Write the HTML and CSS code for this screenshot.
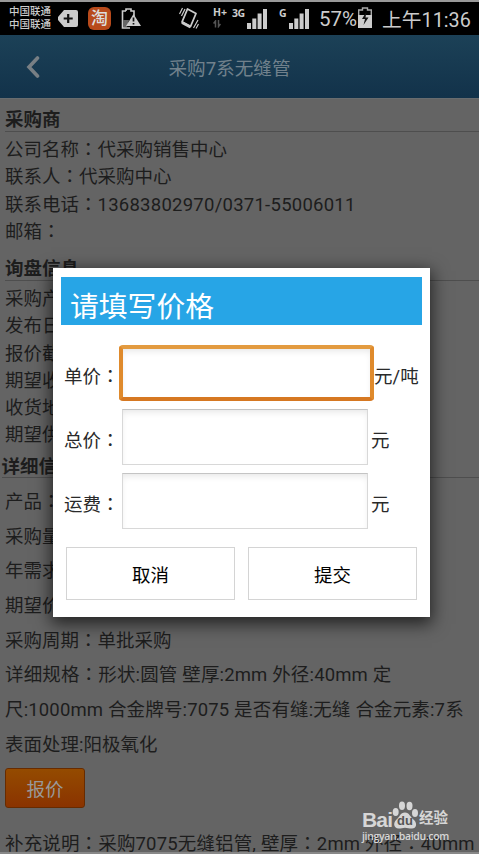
FILE: index.html
```html
<!DOCTYPE html>
<html lang="en">
<head>
  <meta charset="UTF-8">
  <title>采购7系无缝管</title>
  <meta name="viewport" content="width=device-width, initial-scale=1.0">
  <link rel="stylesheet" href="styles.css">
</head>
<body>
  <div class="phone">
    <!-- Status bar -->
    <div class="status-bar">
      <div class="carrier"><span>中国联通</span><span>中国联通</span></div>
      <svg class="icon-plus" width="22" height="20" viewBox="0 0 22 20"><path d="M7 1h12q2 0 2 2v13q0 2-2 2H7L1 11V8z" fill="#ccc"/><path d="M11.2 5v9M6.700 9.500h9" stroke="#111" stroke-width="2.200"/></svg>
      <span class="icon-tao">淘</span>
      <svg class="icon-warn" width="20" height="22" viewBox="0 0 20 22"><path d="M5 3V1h5v2h3v5M9 20H1.500V3H5" fill="none" stroke="#ccc" stroke-width="1.600"/><path d="M2 12h6l-2 7H2z" fill="#666"/><path d="M12.500 6L20 18H5z" fill="#ccc"/><path d="M12.500 9.500v4M12.500 15v1.600" stroke="#111" stroke-width="1.700"/></svg>
      <svg class="icon-vibrate" width="20" height="23" viewBox="0 0 20 23"><path d="M8.500 2L17 6.500 11.500 19.500 3 15z" fill="none" stroke="#ccc" stroke-width="1.800" stroke-linejoin="round"/><path d="M3 15.500l8.500 4.500" stroke="#ccc" stroke-width="3"/><path d="M.5 7l3-6M2.500 9l3.500-7M14.500 21l4.500-8M17 21.500l2.500-4.500" stroke="#ccc" stroke-width="1.200"/></svg>
      <div class="net"><span>H+</span><svg width="8" height="8" viewBox="0 0 8 8"><path d="M2.500 7.500V1L.5 3.500M5.500 0v6.500l2-2.500" fill="none" stroke="#555" stroke-width="1.500"/></svg></div>
      <span class="gen">3G</span>
      <svg class="bars" width="20" height="20" viewBox="0 0 20 20"><path d="M0 14h4v6H0zM5.300 9.500h4V20h-4zM10.600 4.500h4V20h-4zM16 0h4v20h-4z" fill="#ccc"/></svg>
      <span class="gen gen-second">G</span>
      <svg class="bars" width="20" height="20" viewBox="0 0 20 20"><path d="M0 14h4v6H0zM5.300 9.500h4V20h-4zM10.600 4.500h4V20h-4zM16 0h4v20h-4z" fill="#ccc"/></svg>
      <span class="percent">57%</span>
      <svg class="icon-battery" width="14" height="21" viewBox="0 0 14 21"><path d="M4.500 3V1h5v2h3.800v17H.7V3z" fill="none" stroke="#aaa" stroke-width="1.400"/><path d="M0 8h14v13H0z" fill="#ccc"/><path d="M8.500 4.500L4 12h3l-1.500 6 5-7.500H7.500z" fill="#111"/></svg>
      <span class="clock">上午11:36</span>
    </div>

    <div class="nav-bar">
      <svg class="back" width="14" height="22" viewBox="0 0 14 22"><path d="M11.500 2L3 11l8.500 9" fill="none" stroke="#787f84" stroke-width="3.600" stroke-linecap="round"/></svg>
      <h1>采购7系无缝管</h1>
    </div>

    <div class="content">
      <h2>采购商</h2>
      <div class="rows">
        <p>公司名称<i>：</i>代采购销售中心</p>
        <p>联系人<i>：</i>代采购中心</p>
        <p>联系电话<i>：</i><span class="phone-number">13683802970/0371-55006011</span></p>
        <p>邮箱<i>：</i></p>
      </div>

      <h2>询盘信息</h2>
      <div class="rows">
        <p>采购产</p>
        <p>发布日</p>
        <p>报价截</p>
        <p>期望收</p>
        <p>收货地</p>
        <p>期望供</p>
      </div>

      <h2 class="detail-title">详细信</h2>
      <div class="rows rows-wide">
        <p>产品<i>：</i></p>
        <p>采购量</p>
        <p>年需求</p>
        <p>期望价</p>
        <p>采购周期<i>：</i>单批采购</p>
        <p class="spec">详细规格<i>：</i>形状:圆管 壁厚:2mm 外径:40mm 定</p>
        <p class="spec">尺:1000mm 合金牌号:7075 是否有缝:无缝 合金元素:7系</p>
        <p>表面处理:阳极氧化</p>
      </div>
      <button class="quote-btn">报价</button>
      <p class="remark">补充说明<i>：</i>采购7075无缝铝管, 壁厚<i>：</i>2mm 外径<i>：</i>40mm</p>
    </div>

    <!-- Price dialog -->
    <form class="dialog" autocomplete="off">
      <h3>请填写价格</h3>
      <div class="field field-focus">
        <label for="unitPrice">单价<i>：</i></label>
        <input type="text" id="unitPrice" name="unitPrice">
        <span class="unit">元/吨</span>
      </div>
      <div class="field">
        <label for="totalPrice">总价<i>：</i></label>
        <input type="text" id="totalPrice" name="totalPrice">
        <span class="unit">元</span>
      </div>
      <div class="field">
        <label for="freight">运费<i>：</i></label>
        <input type="text" id="freight" name="freight">
        <span class="unit">元</span>
      </div>
      <div class="actions">
        <button type="button">取消</button>
        <button type="button">提交</button>
      </div>
    </form>

    <div class="watermark">
      <div class="brand">
        <span class="bai">Bai</span>
        <span class="paw">
          <svg width="27" height="28" viewBox="0 0 27 28"><g fill="#d6d6d6"><ellipse cx="3.700" cy="11" rx="3" ry="4"/><ellipse cx="10" cy="4.700" rx="3" ry="4.200"/><ellipse cx="17.500" cy="5" rx="3" ry="4.200"/><ellipse cx="23" cy="12" rx="3" ry="4"/><path d="M13 11.500c-5 0-5 4.500-8.500 7-4 3.500-2.500 9 2 9 3 0 4-.8 6.500-.8s4 .8 7 .8c4.500 0 5.500-5 2-8.500-4-3-4.500-7.500-9-7.500z"/></g></svg>
          <b>du</b>
        </span>
        <span class="jingyan">经验</span>
      </div>
      <div class="site">jingyan.baidu.com</div>
    </div>
  </div>
</body>
</html>
```

FILE: styles.css
```css
* { box-sizing: border-box; }
body {
  margin: 0;
  background: #646464;
  color: #1d1d1d;
  font-family: Roboto, "Noto Sans CJK SC", sans-serif;
  font-size: 18.5px;
}
h1, h2, h3, p { margin: 0; }
/* full-width colon sits in the middle of its box */
i { font-style: normal; font-family: "Noto Sans CJK TC", sans-serif; line-height: 0; }
svg { display: block; flex: none; }
.phone {
  position: relative;
  width: 479px;
  height: 854px;
  overflow: hidden;
  border-top: 2px solid #999;
  border-bottom: 2px solid #888;
}

/* status bar */
.status-bar {
  display: flex;
  align-items: center;
  height: 33px;
  padding-left: 9px;
  background: #000;
  color: #ccc;
  white-space: nowrap;
}
.carrier { width: 42px; font-size: 10.5px; font-weight: 500; line-height: 12.5px; }
.carrier span { display: block; }
.icon-plus { margin-left: 6px; }
.icon-tao {
  width: 23px; height: 23px;
  margin-left: 9px;
  border-radius: 6px;
  background: #b84a1b;
  color: #ddd;
  font-size: 17px; font-weight: 500; line-height: 22px;
  text-align: center;
}
.icon-warn { margin-left: 10px; }
.icon-vibrate { margin-left: 38px; }
.net { width: 14px; margin-left: 14px; margin-top: -3px; font: bold 10.5px/13px "Open Sans", sans-serif; }
.net svg { margin-top: 1px; }
.gen { align-self: flex-start; width: 14px; margin: 5px 0 0 5px; font: bold 10.5px/13px "Open Sans", sans-serif; letter-spacing: -0.5px; }
.gen-second { width: 8px; margin-left: 12px; }
.bars { margin-left: 1px; }
.gen-second + .bars { margin-left: 2px; }
.percent { width: 39px; margin-left: 10px; font-size: 20.5px; }
.icon-battery { margin-top: -2px; }
.clock { margin-left: 10px; font-size: 19.8px; }

/* title bar */
.nav-bar {
  display: flex;
  align-items: center;
  height: 64px;
  padding: 0 26px;
  background: linear-gradient(#1c4157, #12324a);
  border-bottom: 1px solid #686c6f;
}
.nav-bar h1 { flex: 1; margin-right: 34px; font-size: 18.6px; font-weight: normal; text-align: center; color: #71818c; }

/* page */
.content { padding: 8px 0 0 5px; }
h2 { height: 25px; border-bottom: 1px solid #4e4e4e; font-size: 18.5px; font-weight: bold; line-height: 26px; }
.rows { padding: 4px 0 9.8px; }
.rows p { height: 27.3px; line-height: 29px; white-space: nowrap; }
.rows + h2 { margin-top: 1px; }
.detail-title { margin-left: -3.5px; }
.rows + .detail-title { height: 24px; margin-top: -4.6px; }
.rows.rows-wide { padding: 6px 0 7px; }
.rows-wide p { height: 34.7px; line-height: 36px; }
.rows-wide .spec { letter-spacing: 0.15px; }
.phone-number { letter-spacing: 0.25px; }
.quote-btn {
  display: block;
  width: 80px; height: 40px;
  padding: 0;
  border: 1px solid #672b00;
  border-radius: 3px;
  background: linear-gradient(#944b00, #8a3300);
  color: #999;
  font: inherit;
}
.remark { margin-top: 21px; line-height: 31px; letter-spacing: 0.15px; white-space: nowrap; }

/* dialog */
.dialog {
  position: absolute;
  left: 53px; top: 265.5px;
  width: 377px; height: 349.5px;
  padding: 9.5px 8.5px 0 8px;
  background: #fff;
  box-shadow: 0 5px 16px 2px rgba(0,0,0,0.65);
}
.dialog h3 { height: 48px; padding-left: 9px; margin-bottom: 20px; background: #27a5e6; color: #fff; font-size: 28.8px; font-weight: normal; line-height: 61px; }
.field { display: flex; align-items: center; height: 56px; margin-bottom: 8px; padding-left: 3px; white-space: nowrap; }
.field label { width: 58px; padding-top: 3px; color: #2a2a2a; }
.field input {
  width: 246px; height: 56px;
  padding: 0 8px;
  border: 1px solid #d8d8d8;
  border-top-color: #c4c4c4;
  box-shadow: inset 0 4px 7px -2px rgba(0,0,0,0.1);
  font: inherit;
}
.field-focus label { width: 55px; }
.field-focus input { width: 255px; border: 4px solid #df8a2c; border-top-color: #e39b40; border-bottom-color: #d67822; border-radius: 4px; }
.unit { margin-left: 3px; padding-top: 3px; color: #2a2a2a; }
.field-focus .unit { margin-left: 0; }
.actions { display: flex; gap: 13px; padding: 10px 0 0 5px; }
.actions button { width: 169px; height: 53px; padding: 0; border: 1px solid #d4d4d4; background: #fff; color: #000; font: inherit; }

/* watermark */
.watermark { position: absolute; left: 362px; top: 798px; width: 90px; color: #d6d6d6; white-space: nowrap; }
.brand { display: flex; align-items: flex-end; height: 29px; }
.bai { width: 30px; font: bold 21px/19px "Liberation Sans", sans-serif; letter-spacing: -0.8px; }
.paw { position: relative; width: 27px; }
.paw b { position: absolute; left: 5px; top: 13px; color: #555; font: bold 13px/13px "Liberation Sans", sans-serif; }
.jingyan { font-size: 14.5px; font-weight: bold; line-height: 21px; }
.site { font: 600 10.5px/14px "Open Sans", sans-serif; letter-spacing: -0.35px; }
```
